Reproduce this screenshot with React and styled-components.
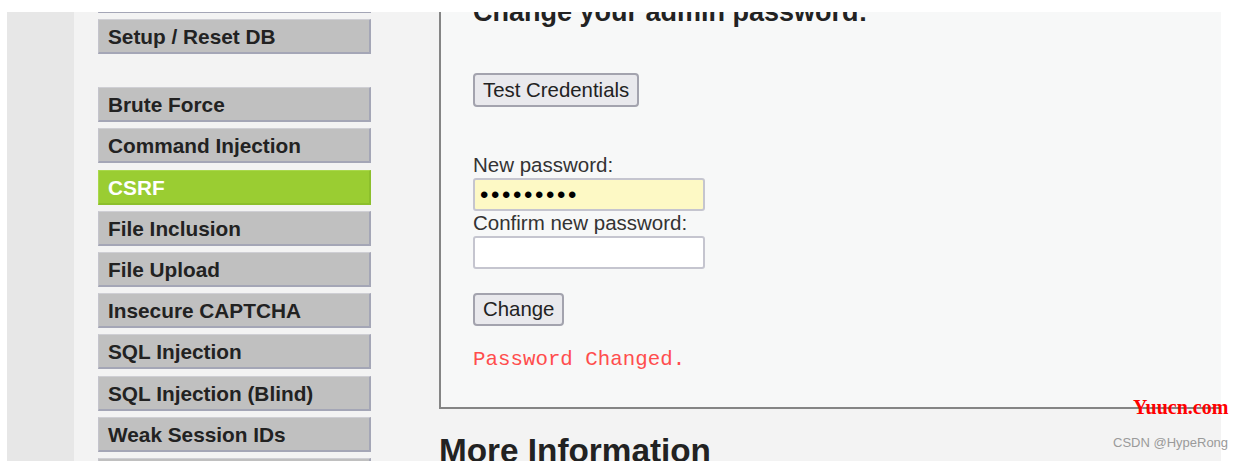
import React from "react";
import styled, { createGlobalStyle } from "styled-components";

const GlobalStyle = createGlobalStyle`
  html, body {
    margin: 0;
    padding: 0;
    background: #ffffff;
  }
  body {
    font-family: "Liberation Sans", Arial, sans-serif;
    color: #222;
  }
`;

const Frame = styled.div`
  display: flex;
  height: 449px;
  margin: 12px 21px 0 7px;
  overflow: hidden;
  background: #e7e7e7;
`;

const Gutter = styled.div`
  width: 67px;
  flex-shrink: 0;
`;

const Page = styled.div`
  flex: 1;
  display: grid;
  grid-template-columns: 365px 1fr;
  background: #f3f3f3;
  min-width: 0;
`;

const Sidebar = styled.nav`
  padding-left: 24px;
`;

const Menu = styled.ul`
  list-style: none;
  margin: ${(p) => (p.$first ? "-34px 0 33px" : "0")};
  padding: 0;
  width: 273px;
`;

const MenuItem = styled.li`
  box-sizing: border-box;
  height: 35px;
  margin-bottom: 6.2px;
  padding-left: 9px;
  line-height: 33px;
  font-size: 20.8px;
  font-weight: bold;
  color: ${(p) => (p.$selected ? "#ffffff" : "#222222")};
  background: ${(p) => (p.$selected ? "#9acd32" : "#c0c0c0")};
  border-top: 1px solid ${(p) => (p.$selected ? "#a9d84c" : "#cfcfd4")};
  border-left: 1px solid ${(p) => (p.$selected ? "#a9d84c" : "#c4c4cc")};
  border-right: 2px solid ${(p) => (p.$selected ? "#8cbf2c" : "#a4a6b6")};
  border-bottom: 2px solid ${(p) => (p.$selected ? "#8cbf2c" : "#a4a6b6")};
  white-space: nowrap;
`;

const Main = styled.main`
  min-width: 0;
`;

const Box = styled.section`
  margin: -30px -40px 0 0;
  padding: 0 0 35px 32px;
  background: #f7f8f8;
  border: 2px solid #858585;
`;

const Title = styled.h3`
  margin: 12px 0 0;
  font-size: 27px;
  line-height: 32px;
  font-weight: bold;
  color: #222;
`;

const Form = styled.form`
  display: flex;
  flex-direction: column;
  align-items: flex-start;
`;

const Button = styled.button`
  box-sizing: border-box;
  height: ${(p) => (p.$tall ? "34px" : "33px")};
  margin-top: ${(p) => p.$gap}px;
  padding: 0 8px;
  font-family: "Liberation Sans", Arial, sans-serif;
  font-size: 20.4px;
  color: #222;
  background: #e9e9ed;
  border: 2px solid #a3a3ae;
  border-radius: 4px;
`;

const Label = styled.label`
  display: block;
  margin-top: ${(p) => p.$gap || 0}px;
  font-size: 20.5px;
  line-height: 23px;
  color: #333;
`;

const Field = styled.input`
  box-sizing: border-box;
  width: 232px;
  height: 33px;
  margin-top: 2px;
  padding: 0 5px;
  font-family: "Liberation Sans", Arial, sans-serif;
  font-size: 24px;
  letter-spacing: 2.6px;
  color: #000;
  background: ${(p) => (p.$filled ? "#fdf9c5" : "#ffffff")};
  border: 2px solid #c5c5cf;
  border-radius: 3px;
  outline: none;
`;

const Notice = styled.pre`
  margin: 22px 0 0;
  font-family: "Liberation Mono", "Courier New", monospace;
  font-size: 20.8px;
  line-height: 24px;
  color: #ff4d4d;
`;

const SectionTitle = styled.h2`
  margin: 22px 0 0;
  font-size: 33.3px;
  line-height: 40px;
  font-weight: bold;
  color: #222;
`;

const SiteMark = styled.span`
  position: absolute;
  left: 1133px;
  top: 396px;
  font-family: "Liberation Serif", "Times New Roman", serif;
  font-size: 20px;
  font-weight: bold;
  color: #ff0000;
`;

const Credit = styled.span`
  position: absolute;
  left: 1113px;
  top: 435px;
  font-family: "Liberation Sans", Arial, sans-serif;
  font-size: 13px;
  color: #9a9a9a;
`;

const topItems = ["DVWA Security", "Setup / Reset DB"];

const vulnItems = [
  "Brute Force",
  "Command Injection",
  "CSRF",
  "File Inclusion",
  "File Upload",
  "Insecure CAPTCHA",
  "SQL Injection",
  "SQL Injection (Blind)",
  "Weak Session IDs",
  "XSS (DOM)",
];

export default function App() {
  return (
    <>
      <GlobalStyle />
      <Frame>
        <Gutter />
        <Page>
          <Sidebar>
            <Menu $first>
              {topItems.map((item) => (
                <MenuItem key={item}>{item}</MenuItem>
              ))}
            </Menu>
            <Menu>
              {vulnItems.map((item) => (
                <MenuItem key={item} $selected={item === "CSRF"}>
                  {item}
                </MenuItem>
              ))}
            </Menu>
          </Sidebar>
          <Main>
            <Box>
              <Title>Change your admin password:</Title>
              <Form onSubmit={(e) => e.preventDefault()}>
                <Button type="button" $tall $gap={45}>
                  Test Credentials
                </Button>
                <Label $gap={46}>New password:</Label>
                <Field type="password" $filled readOnly value="password1" />
                <Label>Confirm new password:</Label>
                <Field type="password" readOnly value="" />
                <Button type="submit" $gap={24}>
                  Change
                </Button>
              </Form>
              <Notice>Password Changed.</Notice>
            </Box>
            <SectionTitle>More Information</SectionTitle>
          </Main>
        </Page>
      </Frame>
      <SiteMark>Yuucn.com</SiteMark>
      <Credit>CSDN @HypeRong</Credit>
    </>
  );
}
